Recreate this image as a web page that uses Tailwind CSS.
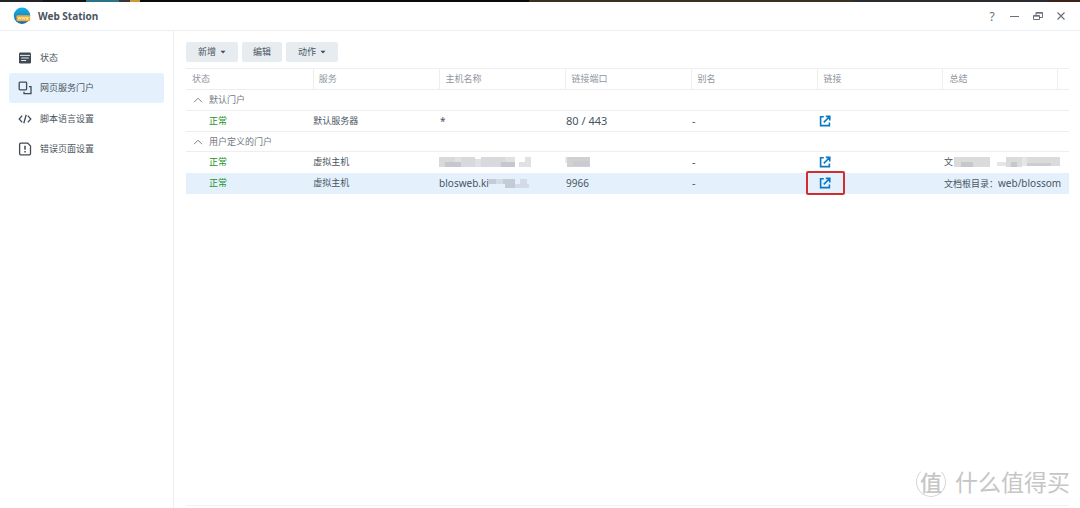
<!DOCTYPE html>
<html lang="zh-CN">
<head>
<meta charset="utf-8">
<meta name="viewport" content="width=device-width, initial-scale=1">
<title>Web Station</title>
<script src="https://cdn.jsdelivr.net/npm/@tailwindcss/browser@4"></script>
</head>
<body class="flex h-screen flex-col overflow-hidden bg-white font-['Noto_Sans','Noto_Sans_CJK_SC',sans-serif] text-[9px] text-[#4b555f]">
<svg width="0" height="0" class="absolute" aria-hidden="true">
  <symbol id="open" viewBox="0 0 12 12"><path d="M4.8 1.8H1.6v8.8h8.8V7.4M6.8 1.4h4v4M10.4 1.8 4.8 7.4" fill="none" stroke="#0a78c2" stroke-width="1.6"/></symbol>
  <symbol id="caret" viewBox="0 0 6 4"><path d="M.5.8h5L3 3.4z" fill="#414b55"/></symbol>
  <symbol id="fold" viewBox="0 0 10 6"><path d="M1 5.2 5 1.2l4 4" fill="none" stroke="#7d858d" stroke-width="1"/></symbol>
</svg>

<div class="flex h-[2px] shrink-0 bg-[#0c080c]" aria-hidden="true">
  <div class="w-[4%] bg-[#222426]"></div><div class="w-[4%] bg-[#141416]"></div><div class="w-[3%] bg-[#2a7388]"></div><div class="w-[1%] bg-[#3a3436]"></div><div class="w-[1%] bg-[#c79b35]"></div><div class="w-[36%]"></div><div class="w-[30%] bg-[#3b2f22]"></div><div class="w-[18%] bg-[#2b2d31]"></div><div class="flex-1 bg-[#3a221b]"></div>
</div>

<header class="flex h-[29px] shrink-0 items-center border-b border-[#e9f0f5] pr-3 pl-[13px]">
  <svg class="size-[18px]" viewBox="0 0 18 18" aria-hidden="true">
    <defs><linearGradient id="globe" x1="0" y1="0" x2="0" y2="1"><stop offset="0" stop-color="#16b4e6"/><stop offset="1" stop-color="#1a62ad"/></linearGradient></defs>
    <circle cx="9" cy="8.8" r="8.2" fill="url(#globe)"/>
    <rect x="3.5" y="8.2" width="13.6" height="6" rx="1" fill="#f0ae3c"/>
    <path d="m5 10 .8 2.4.8-2.2.8 2.2.8-2.4m.7 0 .8 2.4.8-2.2.8 2.2.8-2.4m.7 0 .6 2.4.6-2.2.6 2.2.6-2.4" fill="none" stroke="#fff2c8" stroke-width=".7"/>
  </svg>
  <h1 class="ml-[7px] text-[10px] font-bold">Web Station</h1>
  <div class="ml-auto flex items-center gap-[9px] text-[#68717a]">
    <button class="grid h-4 w-[14px] place-items-center text-[12px]" aria-label="帮助">?</button>
    <button aria-label="最小化"><svg class="size-[14px]" viewBox="0 0 14 14"><path d="M2 7.5h9" stroke="currentColor"/></svg></button>
    <button aria-label="还原"><svg class="size-[14px]" viewBox="0 0 14 14"><path d="M2.5 6.5h6v4h-6zM2.5 7.2h6M5 6V3.5h6.5v5H9M5 4.2h6.5" fill="none" stroke="currentColor"/></svg></button>
    <button aria-label="关闭"><svg class="size-[14px]" viewBox="0 0 14 14"><path d="m3.5 3.5 7 7m0-7-7 7" stroke="currentColor" stroke-width="1.2"/></svg></button>
  </div>
</header>

<div class="flex min-h-0 flex-1">
  <nav class="w-[174px] shrink-0 border-r border-[#e9f0f5] px-[9px] pt-[11px]">
    <ul>
      <li><a href="#" class="flex h-[31px] items-center gap-2 rounded-[3px] px-[9px]">
        <svg class="size-[14px]" viewBox="0 0 14 14"><rect x="1" y="1.6" width="12" height="11" rx="1.4" fill="#414b55"/><path d="M2 4.4h10M3.2 7h7.6M3.2 9.5h5" stroke="#fff" stroke-width=".9"/></svg>状态</a></li>
      <li><a href="#" class="flex h-[30px] items-center gap-2 rounded-[3px] bg-[#e4f1fd] px-[9px]">
        <svg class="size-[14px]" viewBox="0 0 14 14" fill="none" stroke="#414b55" stroke-width="1.3"><rect x="1.2" y="1.2" width="7.4" height="7.6" rx=".8"/><path d="M11 5.6h2v7H6v-1.9"/></svg>网页服务门户</a></li>
      <li><a href="#" class="flex h-[31px] items-center gap-2 rounded-[3px] px-[9px]">
        <svg class="size-[14px]" viewBox="0 0 14 14" fill="none" stroke="#414b55" stroke-width="1.3"><path d="M4.2 3.6 1.2 7l3 3.4M9.8 3.6l3 3.4-3 3.4M8.2 2.8 5.8 11.2"/></svg>脚本语言设置</a></li>
      <li><a href="#" class="flex h-[30px] items-center gap-2 rounded-[3px] px-[9px]">
        <svg class="size-[14px]" viewBox="0 0 14 14" fill="none" stroke="#414b55" stroke-width="1.3"><path d="M2.6 1.2h7.2l2.7 2.7v7.9q0 1-1 1H2.6q-1 0-1-1V2.2q0-1 1-1z"/><path d="M7 3.8v4M7 9v1.5" stroke-width="1.5"/></svg>错误页面设置</a></li>
    </ul>
  </nav>

  <main class="flex min-w-0 flex-1 flex-col pt-[11px] pr-[11px] pb-[2px] pl-3">
    <div class="mb-[6px] flex gap-1">
      <button class="flex h-5 w-[52px] items-center justify-center gap-1 rounded-[2px] bg-[#e7ecf1]">新增<svg class="h-1 w-[6px]"><use href="#caret"/></svg></button>
      <button class="h-5 w-10 rounded-[2px] bg-[#e7ecf1]">编辑</button>
      <button class="flex h-5 w-[52px] items-center justify-center gap-1 rounded-[2px] bg-[#e7ecf1]">动作<svg class="h-1 w-[6px]"><use href="#caret"/></svg></button>
    </div>

    <div class="flex-1 border-b border-[#eef0f2]">
    <table class="w-full table-fixed border-collapse text-left leading-[12px] whitespace-nowrap">
      <thead>
        <tr class="h-[21px] border-y border-[#eceef0] text-[#8f969d]">
          <th class="w-[14.4%] pl-[6px] font-normal">状态</th>
          <th class="border-l border-[#eceef0] pl-[5px] font-normal">服务</th>
          <th class="border-l border-[#eceef0] pl-[6px] font-normal">主机名称</th>
          <th class="border-l border-[#eceef0] pl-[6px] font-normal">链接端口</th>
          <th class="border-l border-[#eceef0] pl-[6px] font-normal">别名</th>
          <th class="border-l border-[#eceef0] pl-[6px] font-normal">链接</th>
          <th class="border-l border-[#eceef0] font-normal"><div class="mr-[11px] flex h-5 items-center border-r border-[#eceef0] pl-[6px]">总结</div></th>
        </tr>
      </thead>
      <tbody>
        <tr class="h-[21px] border-b border-[#eceef0] text-[#717982]"><td colspan="7" class="pl-[7px]"><button class="flex items-center gap-[6px]"><svg class="h-[6px] w-[10px]"><use href="#fold"/></svg>默认门户</button></td></tr>
        <tr class="h-[21px] border-b border-[#eceef0]">
          <td class="pl-[23px] text-[#26942a]">正常</td><td>默认服务器</td><td class="pl-px text-[10px]">*</td><td class="pl-px text-[11px]">80 / 443</td><td class="pl-px text-[11px]">-</td>
          <td class="pl-[2px]"><a href="#" aria-label="打开链接" class="block"><svg class="size-3"><use href="#open"/></svg></a></td><td></td>
        </tr>
        <tr class="h-5 border-b border-[#eceef0] text-[#717982]"><td colspan="7" class="pl-[7px]"><button class="flex items-center gap-[6px]"><svg class="h-[6px] w-[10px]"><use href="#fold"/></svg>用户定义的门户</button></td></tr>
        <tr class="h-[21px]">
          <td class="pl-[23px] text-[#26942a]">正常</td><td>虚拟主机</td>
          <td><svg width="94" height="12" viewBox="0 0 94 12"><path fill="#d8d9dc" d="M0 1h16v10H0zM22 1h14v10H22zM42 1h24v10H42z"/><path fill="#c6c8cc" d="M6 6h16v5H6zM62 6h14v5H62z"/><path fill="#e0e1e3" d="M16 1h6v5h-6zM36 3h6v8h-6zM66 1h10v5H66zM80 6h7v5h-7zM86 1h6v10h-6z"/></svg></td>
          <td><svg width="26" height="12" viewBox="0 0 26 12"><path fill="#e8e9eb" d="M0 1h6v6H0z"/><path fill="#cfd1d4" d="M2 1h23v10H2z"/><path fill="#c9cbce" d="M8 5h16v5H8z"/></svg></td>
          <td class="pl-px text-[11px]">-</td>
          <td class="pl-[2px]"><a href="#" aria-label="打开链接" class="block"><svg class="size-3"><use href="#open"/></svg></a></td>
          <td class="pl-px"><span class="flex items-center">文<svg class="-ml-1" width="112" height="12" viewBox="0 0 112 12"><path fill="#dadbdd" d="M5 1h36v10H5zM57 1h16v10H57zM78 1h33v9H78z"/><path fill="#c5c7cb" d="M12 6h12v5H12zM62 6h6v5h-6z"/><path fill="#e5e6e8" d="M48 6h9v4h-9zM73 1h5v9h-5z"/><path fill="#cccdd0" d="M78 7h24v3H78z"/></svg></span></td>
        </tr>
        <tr class="h-[21px] bg-[#e4f1fd]">
          <td class="pl-[23px] text-[#26942a]">正常</td><td>虚拟主机</td>
          <td><span class="flex items-center text-[10px]">blosweb.ki<svg class="-ml-[2px]" width="44" height="12" viewBox="0 0 44 12"><path fill="#c3cbd5" d="M1 2h27v5H1zM18 7h10v4H18z"/><path fill="#d3dce6" d="M9 2h7v5H9zM28 7h14v4H28zM33 2h7v5h-7z"/></svg></span></td>
          <td class="pl-px text-[10px]">9966</td><td class="pl-px text-[11px]">-</td>
          <td class="pl-[2px]"><span class="relative block w-3"><a href="#" aria-label="打开链接" class="block"><svg class="size-3"><use href="#open"/></svg></a><span class="pointer-events-none absolute -top-[6px] -left-[13px] h-6 w-[39px] rounded-[2px] border-2 border-[#d32c2c]"></span></span></td>
          <td class="pl-px">文档根目录：<span class="text-[10px]">web/blossom</span></td>
        </tr>
      </tbody>
    </table>
    </div>
  </main>
</div>

<div class="pointer-events-none absolute right-[10px] bottom-[11px] flex items-center gap-[9px] text-[#c6c6c6]">
  <span class="grid size-[30px] place-items-center rounded-full border border-[#d6d6d6] border-t-transparent text-[22px] leading-none font-medium">值</span>
  <span class="text-[23px] leading-[30px]">什么值得买</span>
</div>
</body>
</html>
